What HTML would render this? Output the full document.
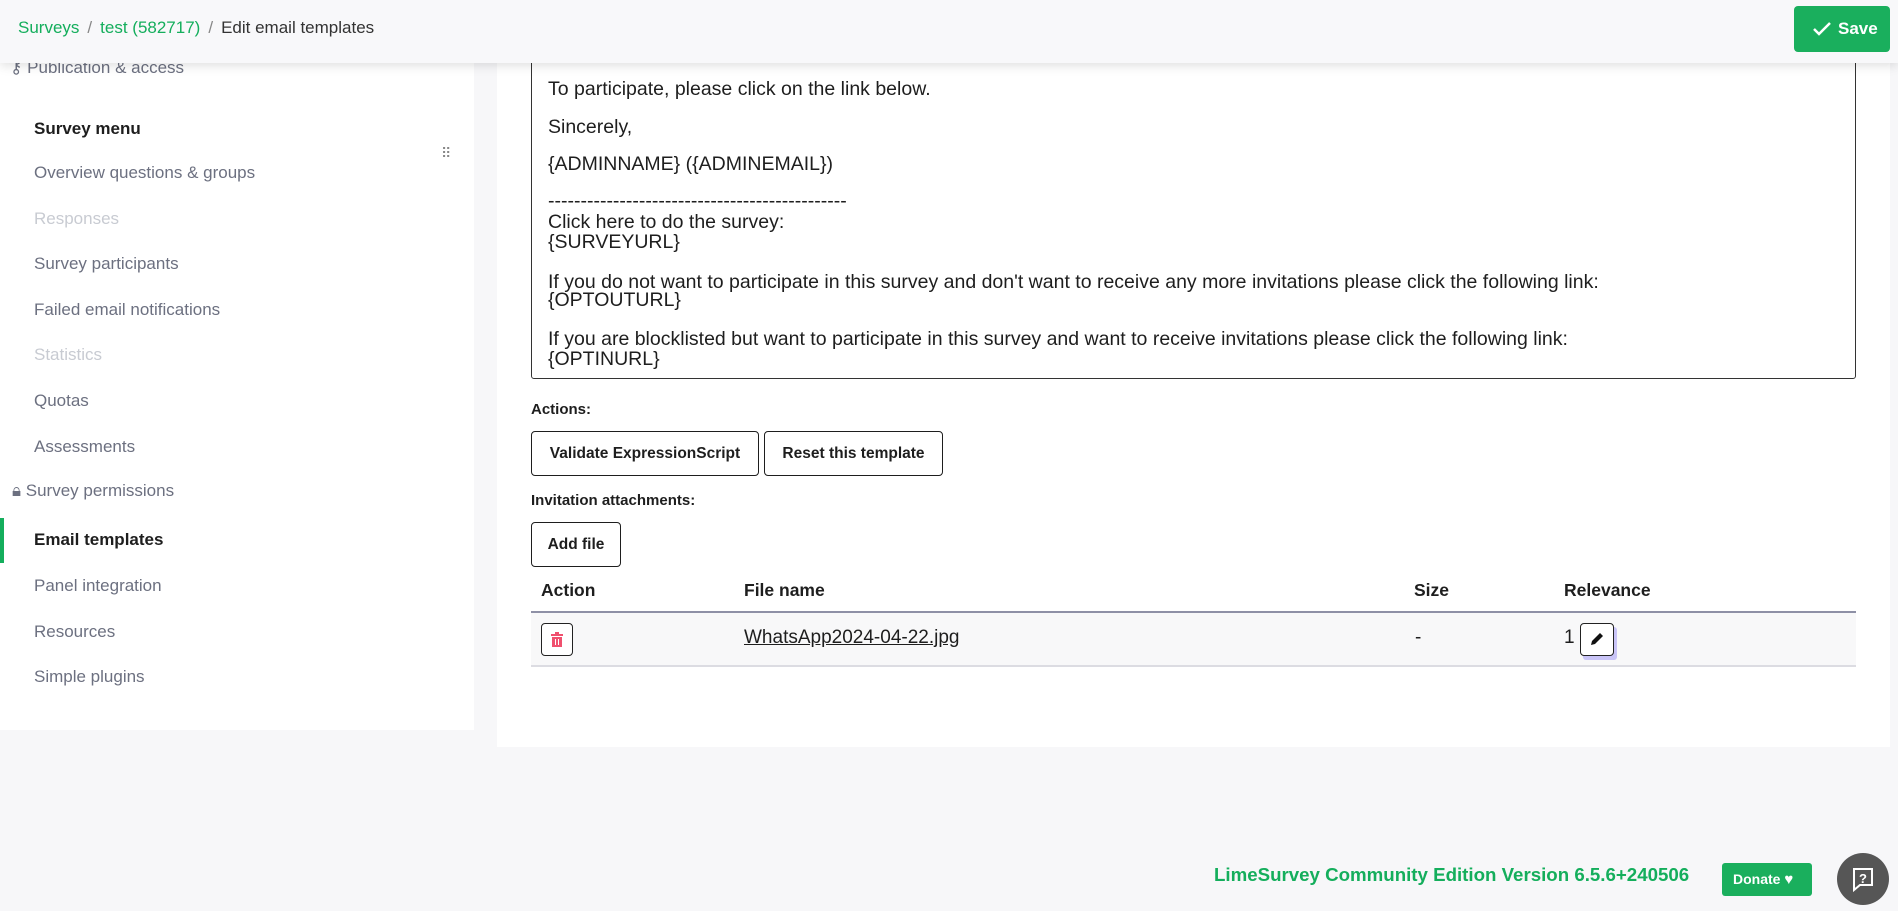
<!DOCTYPE html>
<html><head><style>
*{box-sizing:border-box;margin:0;padding:0}
body{width:1898px;height:911px;background:#f7f7f9;font-family:"Liberation Sans",sans-serif;position:relative;overflow:hidden;color:#1e1e1e}
.top{position:absolute;left:0;top:0;width:1898px;height:63px;background:#f8f8fa;box-shadow:0 3px 10px rgba(0,0,0,.12);z-index:5}
.bc{position:absolute;left:18px;top:18px;font-size:17px;color:#333}
.bc a{color:#14ae5c;text-decoration:none}
.bc .s{color:#888;margin:0 8px}
.save{position:absolute;left:1794px;top:6px;width:96px;height:46px;background:#1aaf5d;border-radius:4px;color:#fff;font-weight:bold;font-size:17px;line-height:46px;padding-left:44px}
.save svg{position:absolute;left:18px;top:15px}
.side{position:absolute;left:0;top:0;width:474px;height:730px;background:#fff}
.it{position:absolute;left:34px;font-size:17px;color:#6c7080}
.dis{color:#c8cbd2}
.main{position:absolute;left:497px;top:0;width:1393px;height:747px;background:#fff}
.ta{position:absolute;left:531px;top:0;width:1325px;height:379px;border:1px solid #333;border-radius:3px;font-size:19.5px;color:#1e1e1e}
.ta div{position:absolute;left:16px;white-space:nowrap}
.lbl{position:absolute;left:531px;font-size:15px;font-weight:bold}
.btn{position:absolute;height:45px;border:1px solid #1e1e1e;border-radius:4px;font-size:15.5px;font-weight:bold;line-height:43px;text-align:center;background:#fff}
.th{position:absolute;top:580px;font-size:17.5px;font-weight:bold}
</style></head><body>
<div class="side">
<div class="it" style="top:58px;left:10px">⚷ Publication &amp; access</div>
<div class="it" style="top:119px;color:#1e1e1e;font-weight:bold">Survey menu</div>
<div style="position:absolute;left:441px;top:150px;color:#888;font-size:14px;line-height:7px;letter-spacing:1px">⠿</div>
<div class="it" style="top:163px">Overview questions &amp; groups</div>
<div class="it dis" style="top:209px">Responses</div>
<div class="it" style="top:254px">Survey participants</div>
<div class="it" style="top:300px">Failed email notifications</div>
<div class="it dis" style="top:345px">Statistics</div>
<div class="it" style="top:391px">Quotas</div>
<div class="it" style="top:437px">Assessments</div>
<div class="it" style="top:481px;left:12px">🔒︎ Survey permissions</div>
<div style="position:absolute;left:0;top:518px;width:4px;height:45px;background:#14ae5c"></div>
<div class="it" style="top:530px;color:#1e1e1e;font-weight:bold">Email templates</div>
<div class="it" style="top:576px">Panel integration</div>
<div class="it" style="top:622px">Resources</div>
<div class="it" style="top:667px">Simple plugins</div>
</div>
<div class="main"></div>
<div class="ta">
<div style="top:77px">To participate, please click on the link below.</div>
<div style="top:115px">Sincerely,</div>
<div style="top:152px">{ADMINNAME} ({ADMINEMAIL})</div>
<div style="top:189px">----------------------------------------------</div>
<div style="top:210px">Click here to do the survey:</div>
<div style="top:230px">{SURVEYURL}</div>
<div style="top:270px">If you do not want to participate in this survey and don't want to receive any more invitations please click the following link:</div>
<div style="top:288px">{OPTOUTURL}</div>
<div style="top:327px">If you are blocklisted but want to participate in this survey and want to receive invitations please click the following link:</div>
<div style="top:347px">{OPTINURL}</div>
</div>
<div class="lbl" style="top:401px">Actions:</div>
<div class="btn" style="left:531px;top:431px;width:228px">Validate ExpressionScript</div>
<div class="btn" style="left:764px;top:431px;width:179px">Reset this template</div>
<div class="lbl" style="top:492px">Invitation attachments:</div>
<div class="btn" style="left:531px;top:522px;width:90px">Add file</div>
<div class="th" style="left:541px">Action</div>
<div class="th" style="left:744px">File name</div>
<div class="th" style="left:1414px">Size</div>
<div class="th" style="left:1564px">Relevance</div>
<div style="position:absolute;left:531px;top:611px;width:1325px;height:56px;background:#f8f8f9;border-top:2px solid #8e90a6;border-bottom:2px solid #dcdce2"></div>
<div style="position:absolute;left:541px;top:623px;width:32px;height:33px;border:1px solid #222;border-radius:4px;background:#fff">
<svg width="30" height="31" viewBox="0 0 30 31"><rect x="9" y="10" width="12" height="2" fill="#f0506e"/><rect x="13" y="8" width="4" height="2" fill="#f0506e"/><rect x="10" y="13" width="10" height="10" fill="#f0506e"/><rect x="13" y="15" width="1" height="6" fill="#fff"/><rect x="16" y="15" width="1" height="6" fill="#fff"/></svg></div>
<div style="position:absolute;left:744px;top:627px;font-size:19px;text-decoration:underline">WhatsApp2024-04-22.jpg</div>
<div style="position:absolute;left:1415px;top:627px;font-size:19px">-</div>
<div style="position:absolute;left:1564px;top:627px;font-size:19px">1</div>
<div style="position:absolute;left:1583px;top:627px;width:34px;height:33px;background:#c9c4f7;border-radius:3px"></div>
<div style="position:absolute;left:1580px;top:623px;width:34px;height:33px;border:1px solid #222;border-radius:4px;background:#fff">
<svg width="32" height="31" viewBox="0 0 32 31"><path d="M10 21 L11 17 L19 9 L22 12 L14 20 Z" fill="#111"/></svg></div>
<div class="top">
<div class="bc"><a>Surveys</a><span class="s">/</span><a>test (582717)</a><span class="s">/</span>Edit email templates</div>
<div class="save"><svg width="20" height="16" viewBox="0 0 20 16"><path d="M2 8 L7 13 L18 2" stroke="#fff" stroke-width="2.5" fill="none"/></svg>Save</div>
</div>
<div style="position:absolute;left:1214px;top:864px;font-size:18.7px;font-weight:bold;color:#14ae5c">LimeSurvey Community Edition Version 6.5.6+240506</div>
<div style="position:absolute;left:1722px;top:863px;width:90px;height:33px;background:#1aaf5d;border-radius:3px;color:#fff;font-size:14px;font-weight:bold;line-height:33px;padding-left:11px">Donate <span style="font-size:15px">♥</span></div>
<div style="position:absolute;left:1837px;top:853px;width:52px;height:52px;border-radius:50%;background:#565656">
<svg width="52" height="52" viewBox="0 0 52 52"><path d="M17 16 H35 V32 H23 L17 37 Z" stroke="#fff" stroke-width="2" fill="none"/><text x="26" y="30" font-size="13" font-weight="bold" fill="#fff" text-anchor="middle" font-family="Liberation Sans">?</text></svg></div>
</body></html>
